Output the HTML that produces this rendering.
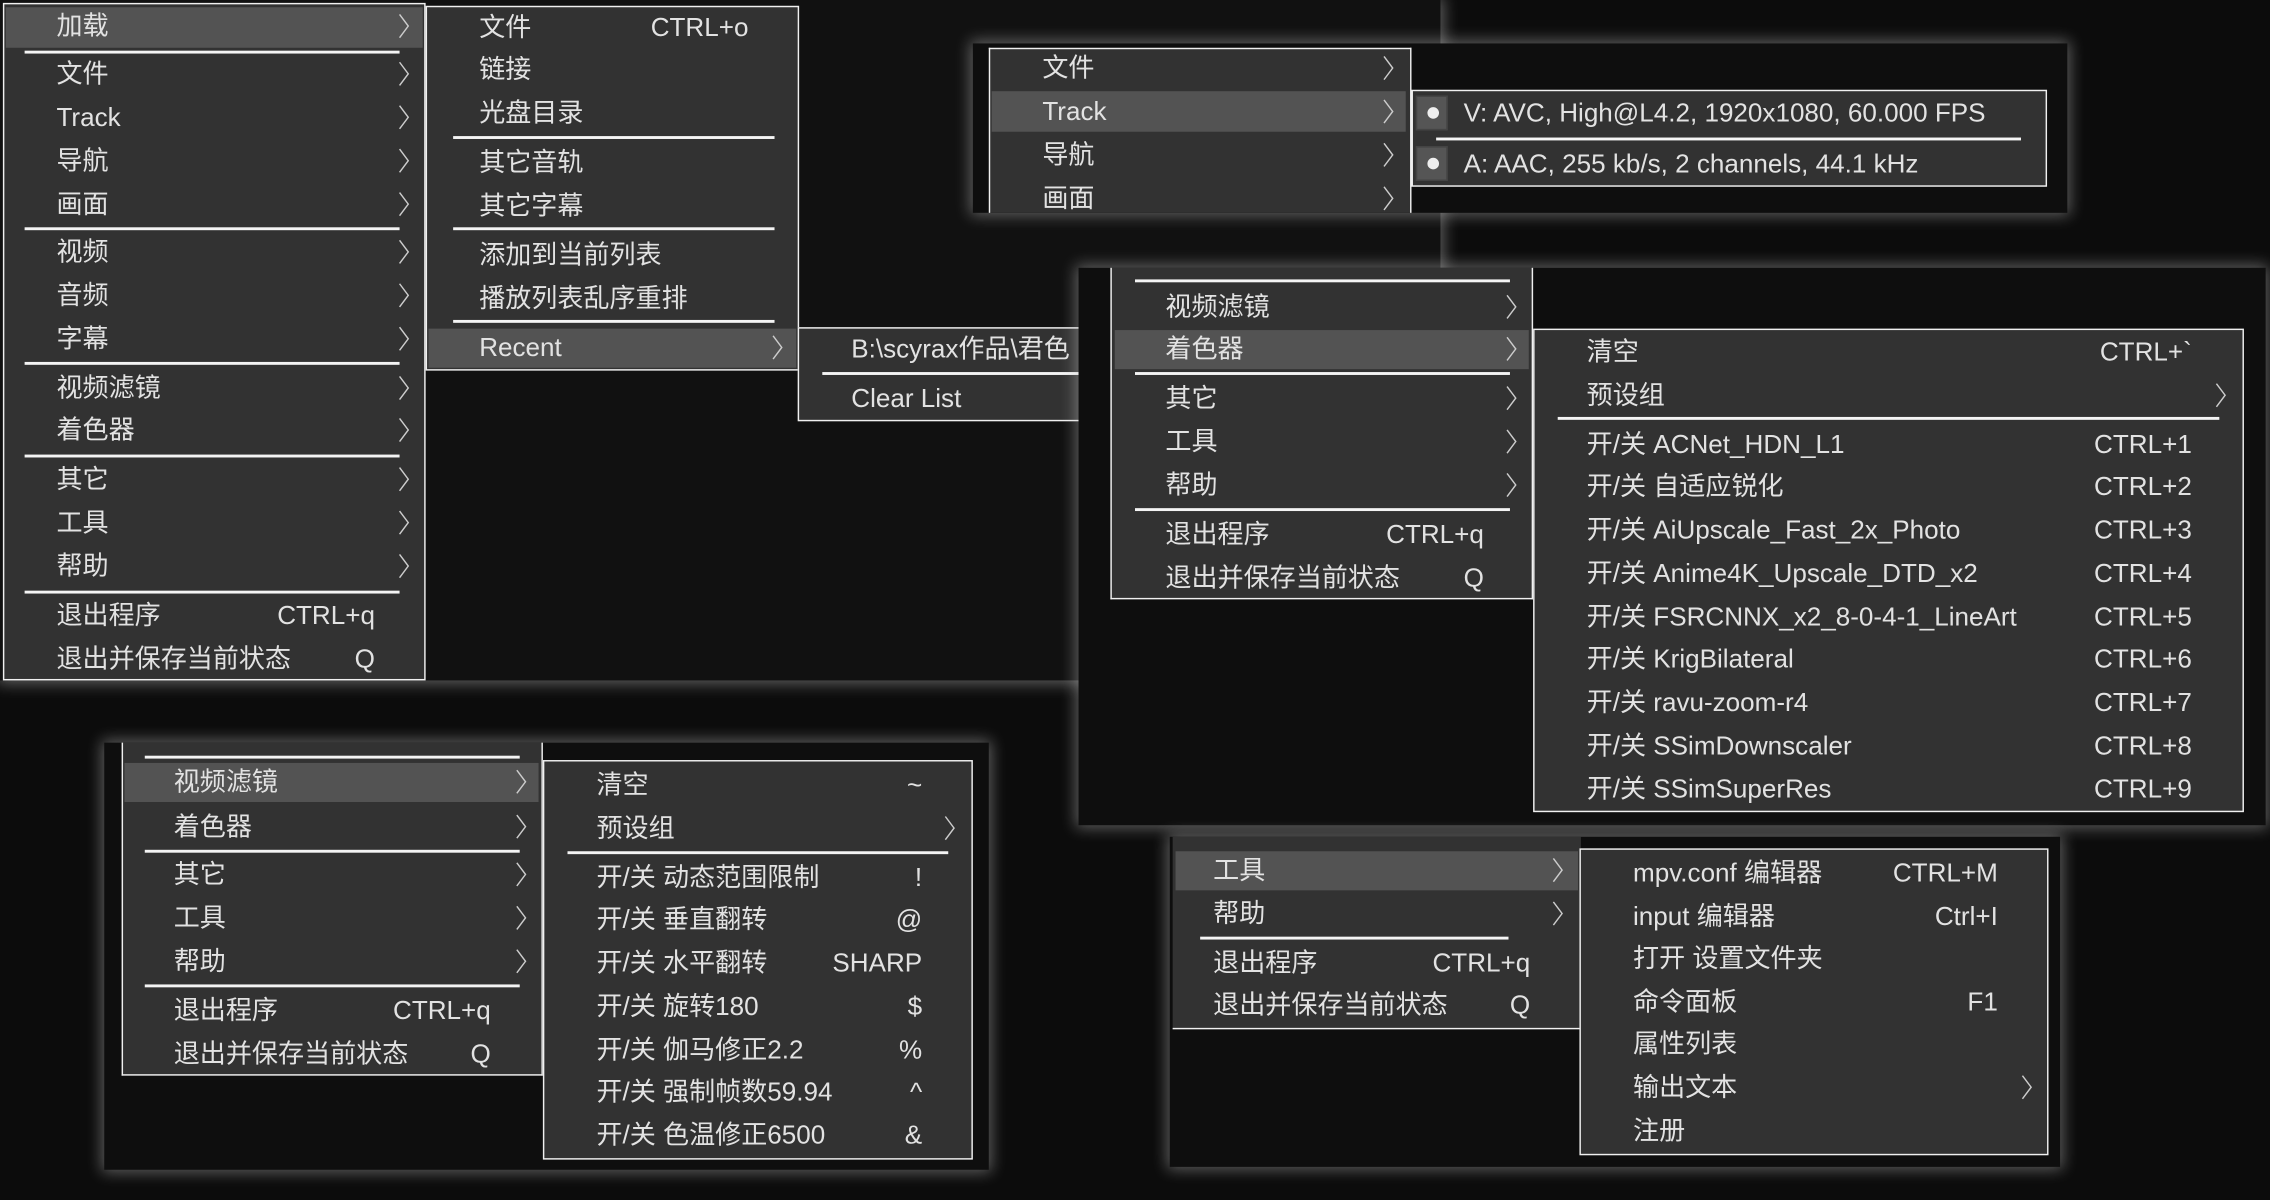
<!DOCTYPE html>
<html><head><meta charset="utf-8">
<style>
html,body{margin:0;padding:0;background:#0c0c0c;width:2270px;height:1200px;overflow:hidden}
#c{position:absolute;left:0;top:0;width:1568px;height:829px;transform:scale(1.44770);transform-origin:0 0;font-family:"Liberation Sans","Noto Sans CJK SC",sans-serif;font-size:18px;color:#e2e2e2}
.tile{position:absolute;background:#0e0e0e;box-shadow:0 0 10px 2px rgba(200,200,200,0.45)}
.m{position:absolute;background:#323232;border:1px solid #f0f0f0;box-sizing:border-box}
.hl{position:absolute;background:#535353}
.s{position:absolute;height:1.5px;background:#f4f4f4}
.t{position:absolute;line-height:24px;white-space:nowrap}
.k{position:absolute;line-height:24px;white-space:nowrap;text-align:right}
.a{position:absolute;width:8px;height:18px}
.b{position:absolute;width:22px;height:24px;background:#555;border:1px solid #444;box-sizing:border-box}
.b:after{content:"";position:absolute;left:7px;top:7px;width:8px;height:8px;border-radius:50%;background:#eee}
</style></head><body><div id="c">

<!-- Tile A -->
<div class="tile" style="left:0;top:0;width:995px;height:470px;background:#111"></div>
<div class="m" style="left:2px;top:2px;width:292px;height:468px"></div>
<div class="hl" style="left:4px;top:5px;width:288px;height:28px"></div>
<div class="s" style="left:17px;top:35px;width:259px"></div>
<div class="s" style="left:17px;top:157px;width:259px"></div>
<div class="s" style="left:17px;top:250px;width:259px"></div>
<div class="s" style="left:17px;top:314px;width:259px"></div>
<div class="s" style="left:17px;top:408px;width:259px"></div>
<div class="t" style="left:39px;top:6px">加载</div>
<div class="t" style="left:39px;top:39px">文件</div>
<div class="t" style="left:39px;top:69px">Track</div>
<div class="t" style="left:39px;top:99px">导航</div>
<div class="t" style="left:39px;top:129px">画面</div>
<div class="t" style="left:39px;top:162px">视频</div>
<div class="t" style="left:39px;top:192px">音频</div>
<div class="t" style="left:39px;top:222px">字幕</div>
<div class="t" style="left:39px;top:256px">视频滤镜</div>
<div class="t" style="left:39px;top:285px">着色器</div>
<div class="t" style="left:39px;top:319px">其它</div>
<div class="t" style="left:39px;top:349px">工具</div>
<div class="t" style="left:39px;top:379px">帮助</div>
<div class="t" style="left:39px;top:413px">退出程序</div>
<div class="t" style="left:39px;top:443px">退出并保存当前状态</div>
<div class="k" style="right:1309px;top:413px">CTRL+q</div>
<div class="k" style="right:1309px;top:443px">Q</div>
<svg class="a" style="left:275px;top:9px" viewBox="0 0 8 18"><path d="M1 1L7 9L1 17" stroke="#ccc" fill="none"/></svg>
<svg class="a" style="left:275px;top:42px" viewBox="0 0 8 18"><path d="M1 1L7 9L1 17" stroke="#ccc" fill="none"/></svg>
<svg class="a" style="left:275px;top:72px" viewBox="0 0 8 18"><path d="M1 1L7 9L1 17" stroke="#ccc" fill="none"/></svg>
<svg class="a" style="left:275px;top:102px" viewBox="0 0 8 18"><path d="M1 1L7 9L1 17" stroke="#ccc" fill="none"/></svg>
<svg class="a" style="left:275px;top:132px" viewBox="0 0 8 18"><path d="M1 1L7 9L1 17" stroke="#ccc" fill="none"/></svg>
<svg class="a" style="left:275px;top:165px" viewBox="0 0 8 18"><path d="M1 1L7 9L1 17" stroke="#ccc" fill="none"/></svg>
<svg class="a" style="left:275px;top:195px" viewBox="0 0 8 18"><path d="M1 1L7 9L1 17" stroke="#ccc" fill="none"/></svg>
<svg class="a" style="left:275px;top:225px" viewBox="0 0 8 18"><path d="M1 1L7 9L1 17" stroke="#ccc" fill="none"/></svg>
<svg class="a" style="left:275px;top:259px" viewBox="0 0 8 18"><path d="M1 1L7 9L1 17" stroke="#ccc" fill="none"/></svg>
<svg class="a" style="left:275px;top:288px" viewBox="0 0 8 18"><path d="M1 1L7 9L1 17" stroke="#ccc" fill="none"/></svg>
<svg class="a" style="left:275px;top:322px" viewBox="0 0 8 18"><path d="M1 1L7 9L1 17" stroke="#ccc" fill="none"/></svg>
<svg class="a" style="left:275px;top:352px" viewBox="0 0 8 18"><path d="M1 1L7 9L1 17" stroke="#ccc" fill="none"/></svg>
<svg class="a" style="left:275px;top:382px" viewBox="0 0 8 18"><path d="M1 1L7 9L1 17" stroke="#ccc" fill="none"/></svg>

<div class="m" style="left:294px;top:4px;width:258px;height:252px"></div>
<div class="hl" style="left:296px;top:227px;width:254px;height:27px"></div>
<div class="s" style="left:313px;top:94px;width:222px"></div>
<div class="s" style="left:313px;top:157px;width:222px"></div>
<div class="s" style="left:313px;top:221px;width:222px"></div>
<div class="t" style="left:331px;top:7px">文件</div>
<div class="k" style="right:1051px;top:7px">CTRL+o</div>
<div class="t" style="left:331px;top:36px">链接</div>
<div class="t" style="left:331px;top:66px">光盘目录</div>
<div class="t" style="left:331px;top:100px">其它音轨</div>
<div class="t" style="left:331px;top:130px">其它字幕</div>
<div class="t" style="left:331px;top:164px">添加到当前列表</div>
<div class="t" style="left:331px;top:194px">播放列表乱序重排</div>
<div class="t" style="left:331px;top:228px">Recent</div>
<svg class="a" style="left:533px;top:231px" viewBox="0 0 8 18"><path d="M1 1L7 9L1 17" stroke="#ccc" fill="none"/></svg>

<div class="m" style="left:551px;top:226px;width:230px;height:65px"></div>
<div class="s" style="left:568px;top:257px;width:200px"></div>
<div class="t" style="left:588px;top:229px">B:\scyrax作品\君色</div>
<div class="t" style="left:588px;top:263px">Clear List</div>

<!-- Tile B -->
<div class="tile" style="left:672px;top:30px;width:756px;height:117px"></div>
<div class="m" style="left:683px;top:33px;width:292px;height:114px;border-bottom:none"></div>
<div class="hl" style="left:685px;top:63px;width:286px;height:28px"></div>
<div class="t" style="left:720px;top:35px">文件</div>
<div class="t" style="left:720px;top:65px">Track</div>
<div class="t" style="left:720px;top:95px">导航</div>
<div class="t" style="left:720px;top:125px">画面</div>
<svg class="a" style="left:955px;top:38px" viewBox="0 0 8 18"><path d="M1 1L7 9L1 17" stroke="#ccc" fill="none"/></svg>
<svg class="a" style="left:955px;top:68px" viewBox="0 0 8 18"><path d="M1 1L7 9L1 17" stroke="#ccc" fill="none"/></svg>
<svg class="a" style="left:955px;top:98px" viewBox="0 0 8 18"><path d="M1 1L7 9L1 17" stroke="#ccc" fill="none"/></svg>
<svg class="a" style="left:955px;top:128px" viewBox="0 0 8 18"><path d="M1 1L7 9L1 17" stroke="#ccc" fill="none"/></svg>
<div class="m" style="left:975px;top:62px;width:439px;height:67px"></div>
<div class="b" style="left:978px;top:66px"></div>
<div class="b" style="left:978px;top:101px"></div>
<div class="s" style="left:992px;top:95px;width:404px"></div>
<div class="t" style="left:1011px;top:66px">V: AVC, High@L4.2, 1920x1080, 60.000 FPS</div>
<div class="t" style="left:1011px;top:101px">A: AAC, 255 kb/s, 2 channels, 44.1 kHz</div>

<!-- Tile C -->
<div class="tile" style="left:745px;top:185px;width:820px;height:385px"></div>
<div class="m" style="left:767px;top:185px;width:292px;height:229px;border-top:none"></div>
<div class="hl" style="left:770px;top:228px;width:286px;height:27px"></div>
<div class="s" style="left:784px;top:193px;width:259px"></div>
<div class="s" style="left:784px;top:257px;width:259px"></div>
<div class="s" style="left:784px;top:351px;width:259px"></div>
<div class="t" style="left:805px;top:200px">视频滤镜</div>
<div class="t" style="left:805px;top:229px">着色器</div>
<div class="t" style="left:805px;top:263px">其它</div>
<div class="t" style="left:805px;top:293px">工具</div>
<div class="t" style="left:805px;top:323px">帮助</div>
<div class="t" style="left:805px;top:357px">退出程序</div>
<div class="t" style="left:805px;top:387px">退出并保存当前状态</div>
<div class="k" style="right:543px;top:357px">CTRL+q</div>
<div class="k" style="right:543px;top:387px">Q</div>
<svg class="a" style="left:1040px;top:203px" viewBox="0 0 8 18"><path d="M1 1L7 9L1 17" stroke="#ccc" fill="none"/></svg>
<svg class="a" style="left:1040px;top:232px" viewBox="0 0 8 18"><path d="M1 1L7 9L1 17" stroke="#ccc" fill="none"/></svg>
<svg class="a" style="left:1040px;top:266px" viewBox="0 0 8 18"><path d="M1 1L7 9L1 17" stroke="#ccc" fill="none"/></svg>
<svg class="a" style="left:1040px;top:296px" viewBox="0 0 8 18"><path d="M1 1L7 9L1 17" stroke="#ccc" fill="none"/></svg>
<svg class="a" style="left:1040px;top:326px" viewBox="0 0 8 18"><path d="M1 1L7 9L1 17" stroke="#ccc" fill="none"/></svg>

<div class="m" style="left:1059px;top:227px;width:491px;height:334px"></div>
<div class="s" style="left:1076px;top:288px;width:457px"></div>
<div class="t" style="left:1096px;top:231px">清空</div>
<div class="k" style="right:54px;top:231px">CTRL+`</div>
<div class="t" style="left:1096px;top:261px">预设组</div>
<svg class="a" style="left:1530px;top:264px" viewBox="0 0 8 18"><path d="M1 1L7 9L1 17" stroke="#ccc" fill="none"/></svg>
<div class="t" style="left:1096px;top:295px">开/关 ACNet_HDN_L1</div><div class="k" style="right:54px;top:295px">CTRL+1</div>
<div class="t" style="left:1096px;top:324px">开/关 自适应锐化</div><div class="k" style="right:54px;top:324px">CTRL+2</div>
<div class="t" style="left:1096px;top:354px">开/关 AiUpscale_Fast_2x_Photo</div><div class="k" style="right:54px;top:354px">CTRL+3</div>
<div class="t" style="left:1096px;top:384px">开/关 Anime4K_Upscale_DTD_x2</div><div class="k" style="right:54px;top:384px">CTRL+4</div>
<div class="t" style="left:1096px;top:414px">开/关 FSRCNNX_x2_8-0-4-1_LineArt</div><div class="k" style="right:54px;top:414px">CTRL+5</div>
<div class="t" style="left:1096px;top:443px">开/关 KrigBilateral</div><div class="k" style="right:54px;top:443px">CTRL+6</div>
<div class="t" style="left:1096px;top:473px">开/关 ravu-zoom-r4</div><div class="k" style="right:54px;top:473px">CTRL+7</div>
<div class="t" style="left:1096px;top:503px">开/关 SSimDownscaler</div><div class="k" style="right:54px;top:503px">CTRL+8</div>
<div class="t" style="left:1096px;top:533px">开/关 SSimSuperRes</div><div class="k" style="right:54px;top:533px">CTRL+9</div>

<!-- Tile D -->
<div class="tile" style="left:72px;top:513px;width:611px;height:295px"></div>
<div class="m" style="left:84px;top:513px;width:291px;height:230px;border-top:none"></div>
<div class="hl" style="left:86px;top:527px;width:286px;height:27px"></div>
<div class="s" style="left:100px;top:522px;width:259px"></div>
<div class="s" style="left:100px;top:587px;width:259px"></div>
<div class="s" style="left:100px;top:680px;width:259px"></div>
<div class="t" style="left:120px;top:528px">视频滤镜</div>
<div class="t" style="left:120px;top:559px">着色器</div>
<div class="t" style="left:120px;top:592px">其它</div>
<div class="t" style="left:120px;top:622px">工具</div>
<div class="t" style="left:120px;top:652px">帮助</div>
<div class="t" style="left:120px;top:686px">退出程序</div>
<div class="t" style="left:120px;top:716px">退出并保存当前状态</div>
<div class="k" style="right:1229px;top:686px">CTRL+q</div>
<div class="k" style="right:1229px;top:716px">Q</div>
<svg class="a" style="left:356px;top:531px" viewBox="0 0 8 18"><path d="M1 1L7 9L1 17" stroke="#ccc" fill="none"/></svg>
<svg class="a" style="left:356px;top:562px" viewBox="0 0 8 18"><path d="M1 1L7 9L1 17" stroke="#ccc" fill="none"/></svg>
<svg class="a" style="left:356px;top:595px" viewBox="0 0 8 18"><path d="M1 1L7 9L1 17" stroke="#ccc" fill="none"/></svg>
<svg class="a" style="left:356px;top:625px" viewBox="0 0 8 18"><path d="M1 1L7 9L1 17" stroke="#ccc" fill="none"/></svg>
<svg class="a" style="left:356px;top:655px" viewBox="0 0 8 18"><path d="M1 1L7 9L1 17" stroke="#ccc" fill="none"/></svg>

<div class="m" style="left:375px;top:525px;width:297px;height:276px"></div>
<div class="s" style="left:392px;top:588px;width:263px"></div>
<div class="t" style="left:412px;top:530px">清空</div><div class="k" style="right:931px;top:530px">~</div>
<div class="t" style="left:412px;top:560px">预设组</div>
<svg class="a" style="left:652px;top:563px" viewBox="0 0 8 18"><path d="M1 1L7 9L1 17" stroke="#ccc" fill="none"/></svg>
<div class="t" style="left:412px;top:594px">开/关 动态范围限制</div><div class="k" style="right:931px;top:594px">!</div>
<div class="t" style="left:412px;top:623px">开/关 垂直翻转</div><div class="k" style="right:931px;top:623px">@</div>
<div class="t" style="left:412px;top:653px">开/关 水平翻转</div><div class="k" style="right:931px;top:653px">SHARP</div>
<div class="t" style="left:412px;top:683px">开/关 旋转180</div><div class="k" style="right:931px;top:683px">$</div>
<div class="t" style="left:412px;top:713px">开/关 伽马修正2.2</div><div class="k" style="right:931px;top:713px">%</div>
<div class="t" style="left:412px;top:742px">开/关 强制帧数59.94</div><div class="k" style="right:931px;top:742px">^</div>
<div class="t" style="left:412px;top:772px">开/关 色温修正6500</div><div class="k" style="right:931px;top:772px">&amp;</div>

<!-- Tile E -->
<div class="tile" style="left:808px;top:578px;width:615px;height:228px"></div>
<div class="m" style="left:810px;top:578px;width:282px;height:133px;border-top:none;border-left:none;border-right:none"></div>
<div class="hl" style="left:812px;top:588px;width:278px;height:27px"></div>
<div class="s" style="left:829px;top:647px;width:213px"></div>
<div class="t" style="left:838px;top:589px">工具</div>
<div class="t" style="left:838px;top:619px">帮助</div>
<div class="t" style="left:838px;top:653px">退出程序</div>
<div class="t" style="left:838px;top:682px">退出并保存当前状态</div>
<div class="k" style="right:511px;top:653px">CTRL+q</div>
<div class="k" style="right:511px;top:682px">Q</div>
<svg class="a" style="left:1072px;top:592px" viewBox="0 0 8 18"><path d="M1 1L7 9L1 17" stroke="#ccc" fill="none"/></svg>
<svg class="a" style="left:1072px;top:622px" viewBox="0 0 8 18"><path d="M1 1L7 9L1 17" stroke="#ccc" fill="none"/></svg>

<div class="m" style="left:1091px;top:586px;width:324px;height:212px"></div>
<div class="t" style="left:1128px;top:591px">mpv.conf 编辑器</div><div class="k" style="right:188px;top:591px">CTRL+M</div>
<div class="t" style="left:1128px;top:621px">input 编辑器</div><div class="k" style="right:188px;top:621px">Ctrl+I</div>
<div class="t" style="left:1128px;top:650px">打开 设置文件夹</div>
<div class="t" style="left:1128px;top:680px">命令面板</div><div class="k" style="right:188px;top:680px">F1</div>
<div class="t" style="left:1128px;top:709px">属性列表</div>
<div class="t" style="left:1128px;top:739px">输出文本</div>
<svg class="a" style="left:1396px;top:742px" viewBox="0 0 8 18"><path d="M1 1L7 9L1 17" stroke="#ccc" fill="none"/></svg>
<div class="t" style="left:1128px;top:769px">注册</div>

</div></body></html>
